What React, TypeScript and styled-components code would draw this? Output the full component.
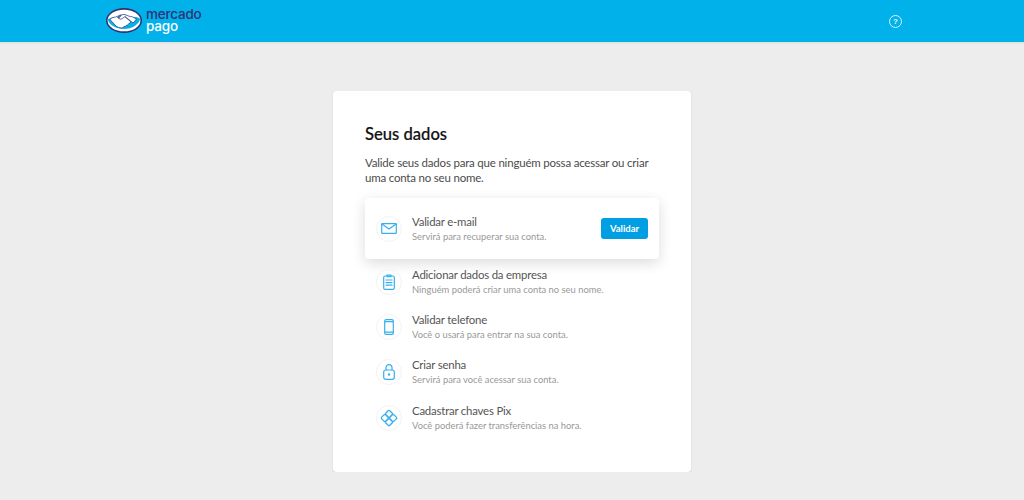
import React from 'react'
import styled, { createGlobalStyle } from 'styled-components'

const GlobalStyle = createGlobalStyle`
  html, body {
    margin: 0;
    padding: 0;
    background: #ededed;
    font-family: Lato, "Open Sans", sans-serif;
  }
`

const Header = styled.header`
  height: 42px;
  background: #00b1ea;
  box-shadow: 0 1px 2px rgba(0, 0, 0, 0.08);
  display: flex;
  align-items: flex-start;
  justify-content: space-between;
  padding: 0 122px 0 106px;
`

const Logo = styled.div`
  display: flex;
  align-items: flex-start;
  gap: 4px;
  padding-top: 8px;
`

const LogoText = styled.div`
  font-family: Inter, sans-serif;
  font-size: 13.5px;
  line-height: 11.5px;
  font-weight: 500;
  letter-spacing: -0.2px;
  color: #2d3277;
  margin-top: 1px;

  span {
    display: block;
    color: #fff;
  }
`

const HelpButton = styled.div`
  margin-top: 15px;
  width: 11px;
  height: 11px;
  border: 1.2px solid #d9f4fd;
  border-radius: 50%;
  color: #e6f8fe;
  font-family: "Liberation Sans", sans-serif;
  font-size: 8px;
  font-weight: 700;
  line-height: 11px;
  text-align: center;
`

const Main = styled.main`
  display: flex;
  justify-content: center;
  padding-top: 49px;
`

const Card = styled.section`
  width: 358px;
  height: 381px;
  box-sizing: border-box;
  background: #fff;
  border-radius: 4px;
  box-shadow: 0 1px 2px rgba(0, 0, 0, 0.1);
  padding: 32px 32px 0;
`

const Title = styled.h1`
  margin: 0;
  font-size: 16.6px;
  line-height: 22px;
  font-weight: 500;
  color: #111;
  -webkit-text-stroke: 0.2px #111;
`

const Intro = styled.p`
  margin: 11px 0 0;
  font-size: 11.5px;
  line-height: 14.5px;
  letter-spacing: -0.2px;
  color: #4b4b4b;
`

const List = styled.div`
  margin-top: 13px;
  display: flex;
  flex-direction: column;
`

const Row = styled.div<{ $active?: boolean }>`
  display: flex;
  align-items: center;
  gap: 10px;
  height: ${({ $active }) => ($active ? '61px' : '45.3px')};
  padding: 0 11px;
  border-radius: 4px;
  background: ${({ $active }) => ($active ? '#fff' : 'transparent')};
  box-shadow: ${({ $active }) =>
    $active ? '0 4px 14px rgba(0, 0, 0, 0.14)' : 'none'};
`

const IconCircle = styled.div`
  width: 24px;
  height: 24px;
  border-radius: 50%;
  border: 1px solid #f3f3f3;
  display: flex;
  align-items: center;
  justify-content: center;
  flex-shrink: 0;
`

const RowText = styled.div`
  flex: 1;
  min-width: 0;
`

const RowTitle = styled.div`
  font-size: 11.4px;
  line-height: 14px;
  letter-spacing: -0.2px;
  color: #555;
`

const RowSub = styled.div`
  font-size: 9.4px;
  line-height: 13px;
  margin-top: 1px;
  color: #999;
`

const ValidateButton = styled.button`
  width: 47px;
  height: 21px;
  padding: 0;
  border: none;
  border-radius: 3px;
  background: #009ee3;
  color: #fff;
  font-family: inherit;
  font-size: 9.5px;
  font-weight: 700;
`

const iconProps = {
  fill: 'none',
  stroke: '#35b0ee',
  strokeWidth: 1.2,
  strokeLinejoin: 'round' as const,
  strokeLinecap: 'round' as const,
}

const MailIcon = () => (
  <svg width="16" height="11" viewBox="0 0 16 11" {...iconProps}>
    <rect x="0.7" y="0.7" width="14.6" height="9.6" rx="0.6" />
    <path d="M0.9 1l7.1 5 7.1-5" />
  </svg>
)

const ClipboardIcon = () => (
  <svg width="12" height="16" viewBox="0 0 12 16" {...iconProps}>
    <rect x="0.7" y="2" width="10.6" height="13.3" rx="1.4" />
    <path d="M4 2.6V1h4v1.6zM3 6h6M3 8.6h6M3 11.2h6" />
  </svg>
)

const PhoneIcon = () => (
  <svg width="10" height="16" viewBox="0 0 10 16" {...iconProps}>
    <rect x="0.7" y="0.7" width="8.6" height="14.6" rx="1.4" />
    <path d="M1 2.6h8M1 13.2h8" />
  </svg>
)

const LockIcon = () => (
  <svg width="12" height="16" viewBox="0 0 12 16" {...iconProps}>
    <rect x="0.7" y="6" width="10.6" height="9.3" rx="2" />
    <path d="M3 6V3.6a3 3 0 0 1 6 0V6" />
    <circle cx="6" cy="10.5" r="0.6" fill="#35b0ee" />
  </svg>
)

const PixIcon = () => (
  <svg width="18" height="18" viewBox="0 0 18 18" {...iconProps} strokeWidth={1.3}>
    <rect x="6.2" y="2" width="5.6" height="5.6" rx="1.2" transform="rotate(45 9 4.8)" />
    <rect x="6.2" y="10.4" width="5.6" height="5.6" rx="1.2" transform="rotate(45 9 13.2)" />
    <rect x="2" y="6.2" width="5.6" height="5.6" rx="1.2" transform="rotate(45 4.8 9)" />
    <rect x="10.4" y="6.2" width="5.6" height="5.6" rx="1.2" transform="rotate(45 13.2 9)" />
  </svg>
)

const HandshakeLogo = () => (
  <svg width="36" height="25" viewBox="0 0 36 25">
    <ellipse cx="18" cy="12.5" rx="18" ry="12.5" fill="#2d3277" />
    <ellipse cx="18" cy="12.5" rx="16.4" ry="10.8" fill="#fff" />
    <path
      d="M1.8 11.5C7 8 9 9.5 12 9c2-.4 4-2.4 6-2.4 3 0 4.6 2 7 2.4 3 .4 6-.8 9.2 2 -1 5-8 10-16 10S3 17 1.8 11.5z"
      fill="#00b1ea"
    />
    <path
      d="M4 11.5l5 5.5c1.5 1.4 3 2.4 5 2.8 2 .3 3.5-.3 4-1.3 1.2.3 2.4-.4 2.6-1.4 1.2.1 2.2-.6 2.3-1.7 1 0 1.8-.7 1.7-1.8l-7-6-3 2.2c-1.4 1-3 .4-3-.8L15.5 7c-2-.5-3.5 1.6-6 2-2 .3-3.5.6-5.5 2.5z"
      fill="#fff"
      stroke="#2d3277"
      strokeWidth="0.7"
    />
    <path
      d="M15.5 7c1.6-.8 3-.6 4.5 0 2 .8 3.5 1.6 6 1.6l4.5 2.4-3.4 4L19 8.5l-3 2.2c-1.4 1-3 .4-3-.8z"
      fill="#fff"
      stroke="#2d3277"
      strokeWidth="0.7"
    />
  </svg>
)

const steps = [
  { title: 'Adicionar dados da empresa', sub: 'Ninguém poderá criar uma conta no seu nome.', icon: <ClipboardIcon /> },
  { title: 'Validar telefone', sub: 'Você o usará para entrar na sua conta.', icon: <PhoneIcon /> },
  { title: 'Criar senha', sub: 'Servirá para você acessar sua conta.', icon: <LockIcon /> },
  { title: 'Cadastrar chaves Pix', sub: 'Você poderá fazer transferências na hora.', icon: <PixIcon /> },
]

export default function App() {
  return (
    <>
      <GlobalStyle />
      <Header>
        <Logo>
          <HandshakeLogo />
          <LogoText>
            mercado
            <span>pago</span>
          </LogoText>
        </Logo>
        <HelpButton>?</HelpButton>
      </Header>
      <Main>
        <Card>
          <Title>Seus dados</Title>
          <Intro>
            Valide seus dados para que ninguém possa acessar ou criar uma conta no seu nome.
          </Intro>
          <List>
            <Row $active>
              <IconCircle>
                <MailIcon />
              </IconCircle>
              <RowText>
                <RowTitle>Validar e-mail</RowTitle>
                <RowSub>Servirá para recuperar sua conta.</RowSub>
              </RowText>
              <ValidateButton>Validar</ValidateButton>
            </Row>
            {steps.map((step) => (
              <Row key={step.title}>
                <IconCircle>{step.icon}</IconCircle>
                <RowText>
                  <RowTitle>{step.title}</RowTitle>
                  <RowSub>{step.sub}</RowSub>
                </RowText>
              </Row>
            ))}
          </List>
        </Card>
      </Main>
    </>
  )
}
